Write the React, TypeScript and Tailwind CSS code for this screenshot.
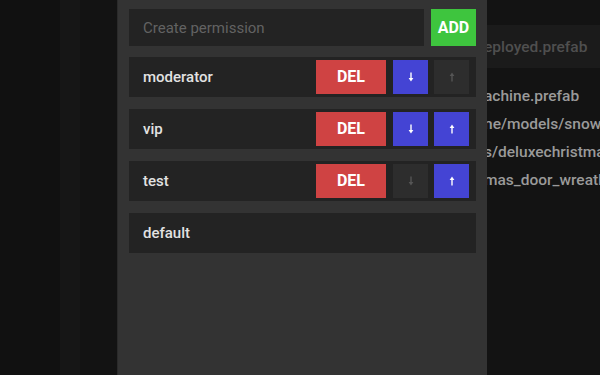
import { useState } from 'react';

interface Permission {
  name: string;
  canDown: boolean;
  canUp: boolean;
}

const files = [
  'eployed.prefab',
  'achine.prefab',
  'ne/models/snowman',
  's/deluxechristmas',
  'mas_door_wreath',
];

function Arrow({ dir, active }: { dir: 'up' | 'down'; active: boolean }) {
  const color = active ? '#ffffff' : '#555555';
  return (
    <svg width="6" height="10" viewBox="0 0 6 10" className={dir === 'up' ? 'rotate-180' : ''}>
      <line x1="3" y1="0.5" x2="3" y2="8" stroke={color} strokeWidth="1.4" />
      <path d="M0.6 6 L3 9.5 L5.4 6 Z" fill={color} />
    </svg>
  );
}

export default function App() {
  const [perms] = useState<Permission[]>([
    { name: 'moderator', canDown: true, canUp: false },
    { name: 'vip', canDown: true, canUp: true },
    { name: 'test', canDown: false, canUp: true },
  ]);

  return (
    <div className="relative w-[600px] h-[375px] overflow-hidden bg-[#131313] flex font-['Roboto',sans-serif]">
      {/* page behind the modal */}
      <div className="w-[60px] shrink-0 bg-[#111111]" />
      <div className="w-[20px] shrink-0 bg-[#161616]" />
      <div className="w-[37px] shrink-0 bg-[#131313]" />
      <div className="flex-1 min-w-0 overflow-hidden flex flex-col bg-[#131313]">
        <div className="h-[25px] shrink-0" />
        <div className="h-[43px] shrink-0 bg-[#1b1b1b] flex items-center pl-[367px] pt-[2px] text-[15.5px] font-medium text-[#4f4f4f] whitespace-nowrap">
          {files[0]}
        </div>
        <div className="pl-[367px] pt-[14px] flex flex-col text-[15.5px] font-medium text-[#9a9a9a] whitespace-nowrap leading-[28px]">
          {files.slice(1).map((f) => (
            <div key={f}>{f}</div>
          ))}
        </div>
      </div>

      {/* permissions modal */}
      <div className="absolute left-[117px] top-0 w-[370px] h-full bg-[#333333] border-l border-[#2a2a2a] px-[11px] pt-[9px] flex flex-col gap-[11px]">
        <div className="flex gap-[7px] h-[37px]">
          <div className="flex-1 bg-[#232323] flex items-center pl-[14px] pt-[2px] text-[15px] text-[#626262]">
            Create permission
          </div>
          <button className="w-[45px] bg-[#3ec53e] text-white font-bold text-[16px] flex items-center justify-center">
            ADD
          </button>
        </div>

        <div className="flex flex-col gap-[12px]">
          {perms.map((p) => (
            <div key={p.name} className="h-[40px] bg-[#232323] flex items-center pl-[14px] pr-[7px]">
              <span className="flex-1 text-[15px] font-medium text-[#e2e2e2]">{p.name}</span>
              <button className="w-[70px] h-[34px] bg-[#cf4343] text-white font-bold text-[16px] flex items-center justify-center">
                DEL
              </button>
              <button
                className={`ml-[7px] w-[35px] h-[34px] flex items-center justify-center ${
                  p.canDown ? 'bg-[#4444d4]' : 'bg-[#2d2d2d]'
                }`}
              >
                <Arrow dir="down" active={p.canDown} />
              </button>
              <button
                className={`ml-[6px] w-[35px] h-[34px] flex items-center justify-center ${
                  p.canUp ? 'bg-[#4444d4]' : 'bg-[#2d2d2d]'
                }`}
              >
                <Arrow dir="up" active={p.canUp} />
              </button>
            </div>
          ))}
          <div className="h-[40px] bg-[#232323] flex items-center pl-[14px]">
            <span className="text-[15px] font-medium text-[#e2e2e2]">default</span>
          </div>
        </div>
      </div>
    </div>
  );
}
